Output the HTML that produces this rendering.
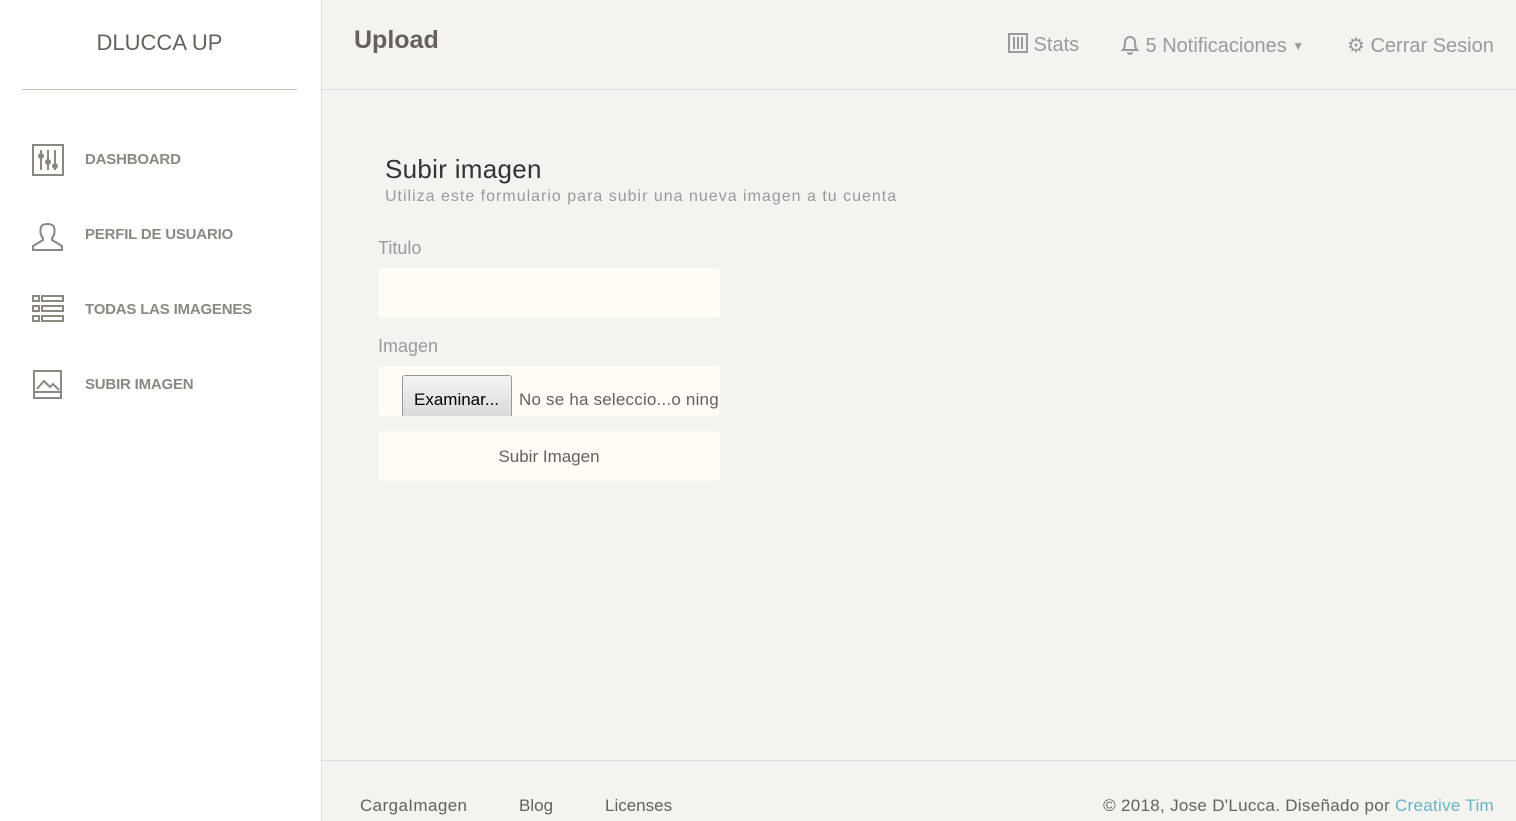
<!DOCTYPE html>
<html><head><meta charset="utf-8"><style>
*{box-sizing:border-box;margin:0;padding:0}
body{width:1516px;height:821px;overflow:hidden;background:#f4f3ef;font-family:"Liberation Sans",sans-serif;position:relative}
.side{position:absolute;left:0;top:0;width:322px;height:821px;background:#fff;border-right:1px solid #ddd}
.logo{position:absolute;left:22px;top:0;width:275px;height:90px;border-bottom:1px solid #ccc5b9;text-align:center;line-height:86px;font-size:22px;color:#66615b}
.nav{position:absolute;left:32px;font-size:15px;font-weight:bold;color:#8c8781;letter-spacing:-0.2px}
.nav svg{position:absolute;left:0;top:-14px}
.nav span{position:absolute;left:53px;top:-7px;white-space:nowrap}
.top{position:absolute;left:322px;top:0;right:0;height:90px;border-bottom:1px solid #ddd}
.title{position:absolute;left:354px;top:26px;font-size:25px;font-weight:bold;color:#66615b}
.tn{position:absolute;top:33px;font-size:20px;color:#9a9a9a;white-space:nowrap}
.t{position:absolute;color:#66615b}
.box{position:absolute;left:378px;width:342px;height:50px;background:#fffcf5;border-radius:4px}
.foot{position:absolute;left:322px;top:760px;right:0;border-top:1px solid #ddd;height:61px}
</style></head><body>
<div class="side">
<div class="logo">DLUCCA UP</div>
<div class="nav" style="top:158px"><svg width="32" height="32" viewBox="0 0 32 32" fill="none" stroke="#8c8781" stroke-width="2"><rect x="1" y="1" width="30" height="30"/><path d="M9 6v20M16 6v20M23 6v20"/><circle cx="9" cy="12" r="2"/><circle cx="16" cy="18" r="2"/><circle cx="23" cy="22" r="2"/></svg><span>DASHBOARD</span></div>
<div class="nav" style="top:233px"><svg width="32" height="32" viewBox="0 0 32 32" fill="none" stroke="#8c8781" stroke-width="2"><path d="M11 19c-3-3-3-7-2-11s12-4 13 0 1 8-2 11v2l10 6v4H1v-4l10-6z"/></svg><span>PERFIL DE USUARIO</span></div>
<div class="nav" style="top:308px"><svg width="32" height="32" viewBox="0 0 32 32" fill="none" stroke="#8c8781" stroke-width="2"><rect x="1" y="2" width="6" height="5"/><rect x="10" y="2" width="21" height="5"/><rect x="1" y="12" width="6" height="5"/><rect x="10" y="12" width="21" height="5"/><rect x="1" y="22" width="6" height="5"/><rect x="10" y="22" width="21" height="5"/></svg><span>TODAS LAS IMAGENES</span></div>
<div class="nav" style="top:383px"><svg width="32" height="32" viewBox="0 0 32 32" fill="none" stroke="#8c8781" stroke-width="2"><rect x="2" y="2" width="27" height="27"/><path d="M2 23h27M5 20l7-8 6 6 3-3 6 6"/></svg><span>SUBIR IMAGEN</span></div>
</div>
<div class="top"></div>
<div class="title">Upload</div>
<div class="tn" style="left:1008px"><svg width="20" height="20" viewBox="0 0 20 20" fill="none" stroke="#9a9a9a" stroke-width="2" style="vertical-align:-2px"><rect x="1" y="1" width="18" height="18"/><path d="M6 4v12M10 4v12M14 4v12"/></svg> Stats</div>
<div class="tn" style="left:1120px"><svg width="20" height="22" viewBox="0 0 20 22" fill="none" stroke="#9a9a9a" stroke-width="2" style="vertical-align:-3px"><path d="M3 17c2-2 2-5 2-8a5 5 0 0110 0c0 3 0 6 2 8zM8 19a2 2 0 004 0"/></svg> 5 Notificaciones <span style="font-size:12px;vertical-align:2px">▼</span></div>
<div class="tn" style="left:1347px">⚙ Cerrar Sesion</div>
<div class="t" style="left:385px;top:154px;font-size:26px;color:#333;letter-spacing:0.3px">Subir imagen</div>
<div class="t" style="left:385px;top:188px;font-size:16px;color:#9a9a9a;letter-spacing:1px">Utiliza este formulario para subir una nueva imagen a tu cuenta</div>
<div class="t" style="left:378px;top:238px;font-size:18px;color:#9a9a9a">Titulo</div>
<div class="box" style="top:268px"></div>
<div class="t" style="left:378px;top:336px;font-size:18px;color:#9a9a9a">Imagen</div>
<div class="box" style="top:366px;overflow:hidden"><div style="position:absolute;left:24px;top:9px;width:110px;height:45px;border:1px solid #999;border-radius:3px;background:linear-gradient(#f5f5f5,#d8d8d8);font-size:17px;color:#000;padding:14px 0 0 11px">Examinar...</div><div style="position:absolute;left:141px;top:24px;font-size:17px;color:#66615b;white-space:nowrap;letter-spacing:0.2px">No se ha seleccio...o ning</div></div>
<div class="box" style="top:431px;text-align:center;line-height:52px;font-size:17px;color:#66615b">Subir Imagen</div>
<div class="foot"></div>
<div class="t" style="left:360px;top:796px;font-size:17px;letter-spacing:0.4px">CargaImagen</div>
<div class="t" style="left:519px;top:796px;font-size:17px">Blog</div>
<div class="t" style="left:605px;top:796px;font-size:17px">Licenses</div>
<div class="t" style="right:22px;top:796px;font-size:17px;white-space:nowrap;letter-spacing:0.3px">© 2018, Jose D'Lucca. Diseñado por <span style="color:#68b3c8">Creative Tim</span></div>
</body></html>
